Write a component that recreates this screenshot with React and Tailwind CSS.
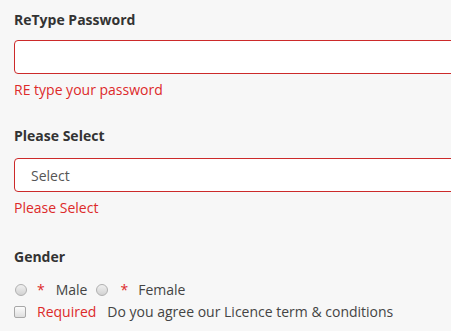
export default function App() {
  return (
    <div className="min-h-screen w-full overflow-hidden bg-[#f7f7f7] pl-[14px] font-['Open_Sans',sans-serif] text-[14px] text-[#333]">
      <Field label="ReType Password" error="RE type your password" top="pt-[10px]" gap="mb-[10px]">
        <input
          type="password"
          className="block h-[34px] w-[600px] rounded-[4px] border border-[#cc2a2a] bg-white px-3 outline-none"
        />
      </Field>
      <Field label="Please Select" error="Please Select" top="pt-[26px]" gap="mb-[12px]">
        <div className="flex h-[34px] w-[600px] items-center rounded-[4px] border border-[#cc2a2a] bg-white pl-[16px] text-[#555]">
          Select
        </div>
      </Field>
      <div className="pt-[29px] font-bold leading-[20px]">Gender</div>
      <div className="mt-[13px] flex items-center leading-[20px] text-[#444]">
        <Radio />
        <span className="ml-[10px] text-[#dd2a2a]">*</span>
        <span className="ml-[11px]">Male</span>
        <Radio className="ml-[8px]" />
        <span className="ml-[13px] text-[#dd2a2a]">*</span>
        <span className="ml-[10px]">Female</span>
      </div>
      <div className="mt-[2px] flex items-center leading-[20px] text-[#444]">
        <span className="h-[12px] w-[12px] rounded-[2px] border border-[#a8a8a8] bg-gradient-to-b from-[#fcfcfc] to-[#dedede]" />
        <span className="ml-[11px] text-[#dd2a2a]">Required</span>
        <span className="ml-[11px]">Do you agree our Licence term &amp; conditions</span>
      </div>
    </div>
  );
}

function Field({ label, error, top, gap, children }) {
  return (
    <div className={top}>
      <div className={gap + " font-bold leading-[20px]"}>{label}</div>
      {children}
      <div className="mt-[6px] leading-[20px] text-[#dd2a2a]">{error}</div>
    </div>
  );
}

function Radio({ className = "" }) {
  return (
    <span
      className={
        "ml-[1px] h-[12px] w-[12px] rounded-full border border-[#b0b0b0] bg-gradient-to-b from-[#f0f0f0] to-[#d2d2d2] " +
        className
      }
    />
  );
}
